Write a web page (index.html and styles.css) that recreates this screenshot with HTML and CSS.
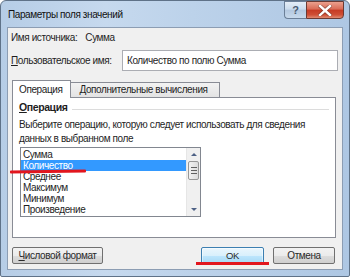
FILE: index.html
```html
<!DOCTYPE html>
<html lang="ru">
<head>
<meta charset="utf-8">
<title>Параметры поля значений</title>
<link rel="stylesheet" href="styles.css">
</head>
<body>
<div class="window">
  <div class="titlebar">
    <div class="title">Параметры поля значений</div>
    <div class="controls">
      <div class="btn-help">?</div>
      <div class="btn-close">
        <svg width="14" height="11" viewBox="0 0 14 11"><path d="M2 1 L12 10 M12 1 L2 10" stroke="#5a2a22" stroke-width="4" stroke-linecap="square" fill="none" opacity="0.5"/><path d="M2 1 L12 10 M12 1 L2 10" stroke="#fff" stroke-width="2.4" stroke-linecap="square" fill="none"/></svg>
      </div>
    </div>
  </div>
  <div class="client">
    <div class="row source">
      <span class="label">Имя источника:</span><span class="value">Сумма</span>
    </div>
    <div class="row custom">
      <span class="label"><u>П</u>ользовательское имя:</span>
      <div class="input">Количество по полю Сумма</div>
    </div>
    <div class="tabs">
      <div class="tab active">Операция</div>
      <div class="tab">Дополнительные вычисления</div>
    </div>
    <div class="panel">
      <div class="group-title"><span><u>О</u>перация</span><div class="line"></div></div>
      <div class="desc">Выберите операцию, которую следует использовать для сведения<br>данных в выбранном поле</div>
      <div class="listbox">
        <div class="items">
          <div class="item">Сумма</div>
          <div class="item selected">Количество</div>
          <div class="item">Среднее</div>
          <div class="item">Максимум</div>
          <div class="item">Минимум</div>
          <div class="item">Произведение</div>
        </div>
        <div class="scrollbar">
          <div class="arrow up"></div>
          <div class="thumb"><div class="grip"></div><div class="grip"></div><div class="grip"></div></div>
          <div class="track"></div>
          <div class="arrow down"></div>
        </div>
      </div>
      <div class="mark mark-list"></div>
    </div>
    <div class="buttons">
      <div class="button fmt"><u>Ч</u>исловой формат</div>
      <div class="spacer"></div>
      <div class="ok-wrap">
        <div class="button ok">OK</div>
        <div class="mark mark-ok"></div>
      </div>
      <div class="button cancel">Отмена</div>
    </div>
  </div>
</div>
</body>
</html>
```
FILE: styles.css
```css
html, body {
  margin: 0;
  padding: 0;
  background: #ffffff;
}
body {
  width: 350px;
  height: 278px;
  overflow: hidden;
  font-family: "Liberation Sans", Arial, sans-serif;
  font-size: 10px;
  letter-spacing: -0.4px;
  color: #1e1e1e;
  white-space: nowrap;
}
.window {
  box-sizing: border-box;
  width: 350px;
  height: 277px;
  border: 1px solid #5f7288;
  border-radius: 6px 6px 2px 2px;
  background: linear-gradient(90deg, #b6cde6 0%, #c6d9ee 30%, #bcd2ea 55%, #aec7e3 100%);
  display: flex;
  flex-direction: column;
}
.titlebar {
  height: 26px;
  display: flex;
  align-items: flex-start;
  justify-content: space-between;
}
.title {
  padding: 8px 0 0 7px;
  font-size: 10px;
  letter-spacing: -0.4px;
  color: #111;
}
.controls {
  display: flex;
  margin-right: 5px;
}
.btn-help {
  width: 22px;
  height: 18px;
  box-sizing: border-box;
  border: 1px solid #6b7f98;
  border-right: none;
  border-radius: 0 0 0 4px;
  background: linear-gradient(#e4edf7 0%, #cbdcee 45%, #b3c8e0 50%, #c7d9ec 100%);
  color: #4a5a70;
  font-size: 11px;
  font-weight: bold;
  letter-spacing: 0;
  text-align: center;
  line-height: 16px;
}
.btn-close {
  width: 38px;
  height: 18px;
  box-sizing: border-box;
  border: 1px solid #6b3a33;
  border-radius: 0 0 4px 0;
  background: linear-gradient(#eba08e 0%, #d96a55 45%, #c63a24 50%, #cf4f35 80%, #e08a72 100%);
  display: flex;
  align-items: center;
  justify-content: center;
}
.client {
  flex: 1;
  margin: 0 6px 6px 6px;
  border: 1px solid #8c9db3;
  background: #f0f0f0;
  display: flex;
  flex-direction: column;
  padding: 0 4px 0 3px;
}
.row {
  display: flex;
  align-items: center;
}
.source {
  height: 18px;
}
.source .value {
  margin-left: 8px;
}
.custom {
  height: 22px;
  margin-top: 3px;
}
.custom .label {
  width: 111px;
}
.input {
  flex: 1;
  height: 21px;
  box-sizing: border-box;
  border: 1px solid #abadb3;
  background: #fff;
  padding-left: 4px;
  line-height: 19px;
  margin-left: 0;
}
.tabs {
  display: flex;
  margin: 9px 0 0 1px;
  height: 17px;
  align-items: flex-end;
  position: relative;
  z-index: 1;
}
.tab {
  box-sizing: border-box;
  height: 15px;
  border: 1px solid #898c95;
  border-bottom: none;
  background: linear-gradient(#f2f2f2, #e3e3e3);
  padding: 0 11px 0 8px;
  line-height: 14px;
}
.tab + .tab {
  border-left: none;
}
.tab.active {
  height: 18px;
  margin-bottom: -1px;
  background: #fff;
  padding: 0 8px 0 6px;
  line-height: 17px;
}
.panel {
  box-sizing: border-box;
  height: 141px;
  margin: 0 2px 0 1px;
  border: 1px solid #898c95;
  background: #fff;
  padding: 1px 6px 0 6px;
  position: relative;
}
.group-title {
  display: flex;
  align-items: center;
  font-weight: bold;
  font-size: 10.5px;
  height: 16px;
}
.group-title .line {
  flex: 1;
  height: 1px;
  background: #dcdcdc;
  margin: 4px 0 0 5px;
}
.desc {
  margin-top: 3px;
  line-height: 14px;
}
.listbox {
  display: flex;
  width: 181px;
  height: 70px;
  box-sizing: border-box;
  border: 1px solid #828790;
  margin: 1px 0 0 1px;
}
.items {
  flex: 1;
  padding-top: 1px;
}
.item {
  height: 11px;
  line-height: 11px;
  padding-left: 2px;
  white-space: nowrap;
}
.item.selected {
  background: #3399ff;
  color: #fff;
}
.scrollbar {
  width: 13px;
  display: flex;
  flex-direction: column;
  background: #f0f0f0;
  border-left: 1px solid #e6e6e6;
}
.arrow {
  height: 13px;
  position: relative;
}
.arrow::after {
  content: "";
  position: absolute;
  left: 4px;
  width: 0;
  height: 0;
  border-left: 3px solid transparent;
  border-right: 3px solid transparent;
}
.arrow.up::after {
  top: 5px;
  border-bottom: 3px solid #4d6185;
}
.arrow.down::after {
  top: 5px;
  border-top: 3px solid #4d6185;
}
.thumb {
  height: 19px;
  margin: 0 1px;
  box-sizing: border-box;
  border: 1px solid #979797;
  border-radius: 2px;
  background: linear-gradient(90deg, #f2f2f2, #dcdcdc);
  display: flex;
  flex-direction: column;
  justify-content: center;
  align-items: center;
  gap: 2px;
}
.grip {
  width: 6px;
  height: 1px;
  background: #606060;
}
.track {
  flex: 1;
}
.mark {
  background: #e2161e;
  height: 3px;
  position: absolute;
}
.mark-list {
  left: -3px;
  top: 72px;
  width: 76px;
  border-radius: 1px;
  transform: rotate(-0.6deg);
}
.buttons {
  display: flex;
  align-items: center;
  margin-top: 9px;
  padding: 0 3px 0 1px;
}
.button {
  box-sizing: border-box;
  height: 17px;
  border: 1px solid #707070;
  border-radius: 2px;
  background: linear-gradient(#f2f2f2 0%, #ebebeb 50%, #dddddd 51%, #cfcfcf 100%);
  text-align: center;
  line-height: 15px;
  color: #2a2a2a;
}
.fmt {
  width: 91px;
}
.spacer {
  flex: 1;
}
.ok-wrap {
  position: relative;
  margin-right: 9px;
}
.ok {
  width: 63px;
  border-color: #3c7fb1;
  background: linear-gradient(#eaf6fd 0%, #d9f0fc 50%, #bee6fd 51%, #a7d9f5 100%);
  box-shadow: inset 0 0 0 1px #ffffff80;
  font-size: 9.5px;
}
.cancel {
  width: 62px;
}
.mark-ok {
  left: -5px;
  top: 15px;
  width: 73px;
}
```
